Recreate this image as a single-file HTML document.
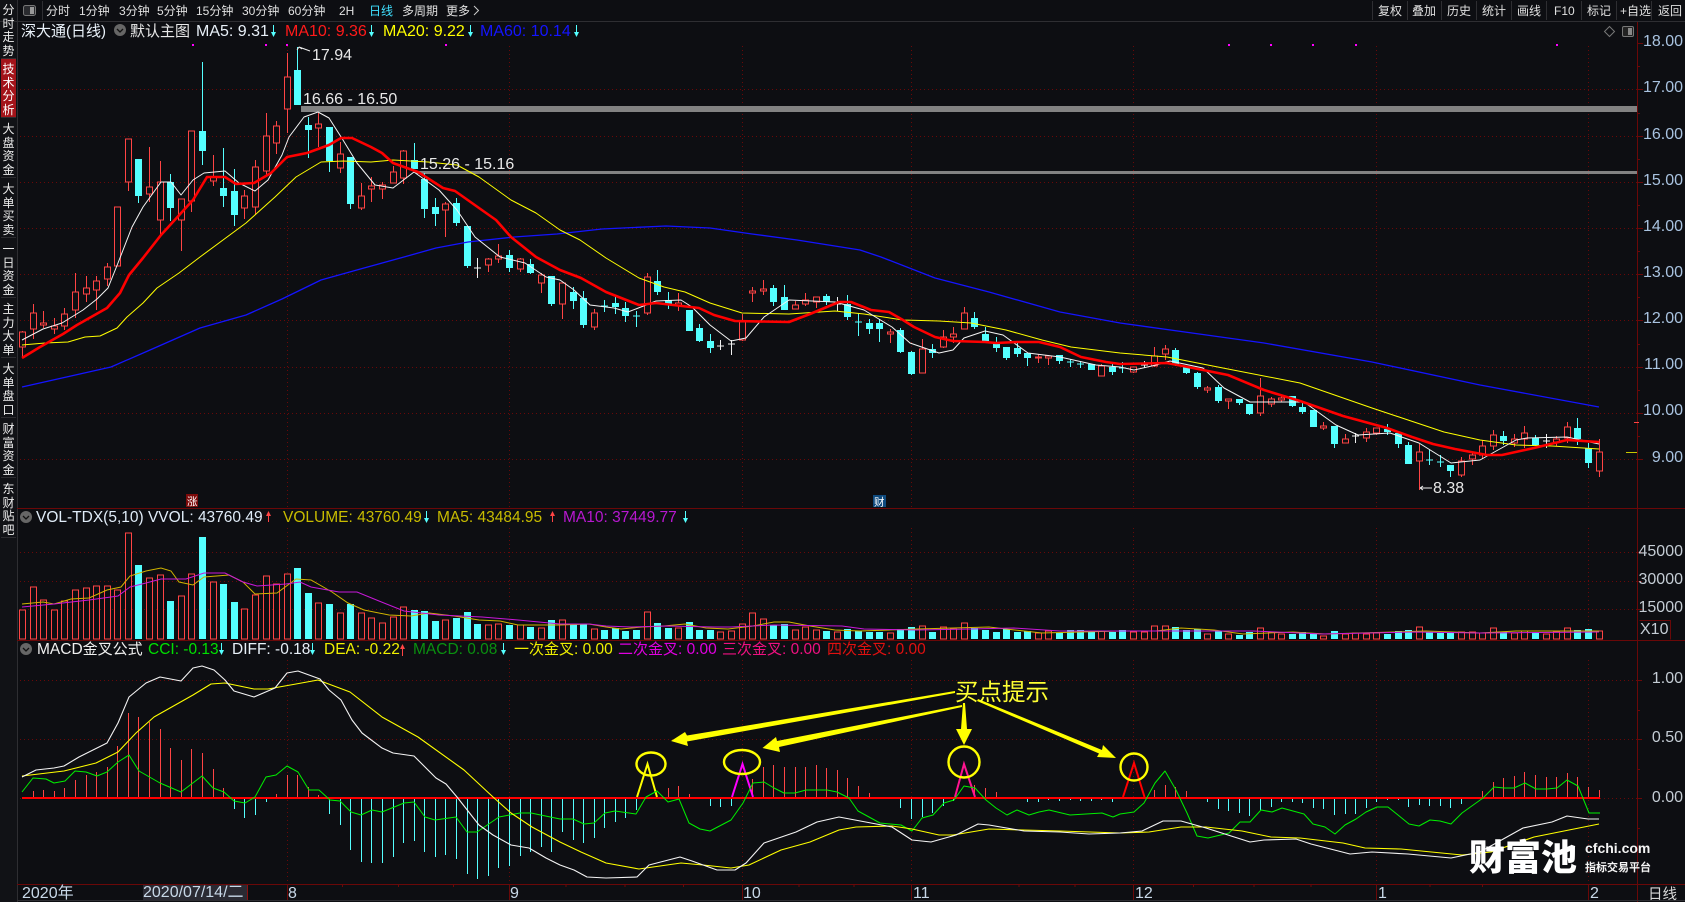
<!DOCTYPE html>
<html><head><meta charset="utf-8"><title>深大通</title>
<style>
html,body{margin:0;padding:0;background:#0d0e12;width:1685px;height:902px;overflow:hidden}
svg{position:absolute;left:0;top:0}
text{font-family:"Liberation Sans","Noto Sans CJK SC",sans-serif;white-space:pre}
.tb{font-size:12px;fill:#e0e0e0;font-family:"Liberation Sans","WenQuanYi Zen Hei","Noto Sans CJK SC",sans-serif}
.t{font-size:15.5px}
.ax{font-size:16px;fill:#a9c3e0;text-anchor:end}
.ax2{font-size:16px;fill:#c4ccd4;text-anchor:end}
.dt{font-size:16px;fill:#c8d8e8}
.ann{font-size:16px;fill:#e8e8e8}
.sb{position:absolute;left:1px;width:15px;height:59px;color:#eee;font:12px/13.5px "WenQuanYi Zen Hei","Noto Sans CJK SC",sans-serif;text-align:center;padding-top:0;box-sizing:border-box;border-bottom:1px solid #2c2c30}
.sb span{display:block;margin-top:3px}
.sba{background:#a3141a;color:#fff}
</style></head><body>
<svg width="1685" height="902" viewBox="0 0 1685 902" xmlns="http://www.w3.org/2000/svg">
<rect width="1685" height="902" fill="#0d0e12"/>
<!-- frame -->
<rect x="0" y="0" width="17" height="902" fill="#111216"/>
<path d="M17.5 0V902M0 21.5H1685" stroke="#2e2e32" fill="none"/>
<path d="M42.5 1V20M1372.5 1V20M1407.5 1V20M1441.5 1V20M1476.5 1V20M1511.5 1V20M1546.5 1V20M1581.5 1V20M1616.5 1V20M1651.5 1V20" stroke="#2e2e32" fill="none"/>
<!-- grid -->
<g stroke="#6a0808" stroke-dasharray="1 3" fill="none" shape-rendering="crispEdges">
<path d="M20 89.5H1637M20 136.5H1637M20 182.5H1637M20 228.5H1637M20 274.5H1637M20 320.5H1637M20 367.5H1637M20 413.5H1637M20 459.5H1637M20 552.5H1637M20 581.5H1637M20 609.5H1637M20 680.5H1637M20 739.5H1637M20 798.5H1637"/>
<path d="M287.5 46V508M509.5 46V508M742.5 46V508M911.5 46V508M1133.5 46V508M1376.5 46V508M1588.5 46V508M287.5 528V640M509.5 528V640M742.5 528V640M911.5 528V640M1133.5 528V640M1376.5 528V640M1588.5 528V640M287.5 660V884M509.5 660V884M742.5 660V884M911.5 660V884M1133.5 660V884M1376.5 660V884M1588.5 660V884"/>
</g>
<g stroke="#6a0808" fill="none" shape-rendering="crispEdges">
<path d="M17 508.5H1685M17 640.5H1685M17 884.5H1685M1637.5 22V902"/>
<path d="M1637 43.5h6M1637 89.5h6M1637 136.5h6M1637 182.5h6M1637 228.5h6M1637 274.5h6M1637 320.5h6M1637 367.5h6M1637 413.5h6M1637 459.5h6M1637 66.5h3M1637 113.5h3M1637 159.5h3M1637 205.5h3M1637 251.5h3M1637 297.5h3M1637 344.5h3M1637 390.5h3M1637 436.5h3M1637 552.5h5M1637 581.5h5M1637 609.5h5M1637 680.5h5M1637 739.5h5M1637 798.5h5M1637 710.5h3M1637 769.5h3M1637 828.5h3"/>
<path d="M287.5 884V900M509.5 884V900M742.5 884V900M911.5 884V900M1133.5 884V900M1376.5 884V900M1588.5 884V900M342.5 884v3M398.5 884v3M453.5 884v3M566 884v3M625 884v3M683.5 884v3M799 884v3M854 884v3M1019 884v3M1075 884v3M1193.5 884v3M1254 884v3M1311 884v3M1430 884v3M1482.5 884v3"/>
<path d="M1639.5 620.5H1670.5V639.5"/>
</g>
<path d="M17 900.5H1685" stroke="#2e2e32"/>
<!-- zones -->
<rect x="301" y="106" width="1336" height="6" fill="#828282"/>
<rect x="416" y="171" width="1221" height="3" fill="#828282"/>
<!-- magenta dots -->
<path d="M192 44h2v2h-2zM265 44h2v2h-2zM286 44h2v2h-2zM445 44h2v2h-2zM1228 44h2v2h-2zM1270 44h2v2h-2zM1312 44h2v2h-2zM1355 44h2v2h-2zM1556 44h2v2h-2z" fill="#ff00ff"/>
<!-- red wicks -->
<path stroke="#ff4444" fill="none" shape-rendering="crispEdges" d="M22.5 331V358M33.5 304V339M43.5 311V328M54.5 318V334M64.5 308V330M75.5 273V318M86.5 276V302M96.5 276V310M107.5 263V286M128.5 139V191M149.5 147V202M160.5 161V235M181.5 199V251M191.5 131V212M213.5 155V186M244.5 190V219M255.5 160V215M266.5 113V175M276.5 121V154M287.5 53V133M318.5 113V147M340.5 142V173M361.5 183V210M371.5 177V202M382.5 182V199M393.5 166V183M403.5 150V184M445.5 202V237M488.5 258V272M498.5 244V263M520.5 258V272M541.5 273V293M562.5 283V319M594.5 309V330M647.5 273V315M678.5 293V311M742.5 314V341M752.5 287V302M763.5 280V295M795.5 301V309M805.5 293V306M816.5 297V308M890.5 329V343M922.5 339V373M943.5 330V348M953.5 327V343M964.5 307V329M1038.5 354V363M1048.5 355V365M1101.5 364V376M1133.5 367V373M1154.5 347V367M1165.5 345V360M1207.5 386V393M1228.5 399V409M1260.5 378V416M1271.5 397V407M1281.5 396V402M1323.5 422V430M1345.5 434V443M1366.5 428V442M1376.5 428V435M1419.5 444V490M1461.5 457V477M1472.5 452V465M1482.5 440V459M1493.5 430V450M1514.5 434V447M1524.5 426V448M1556.5 436V446M1567.5 422V443M1599.5 439V477"/>
<!-- red bodies -->
<path stroke="#ff4444" fill="#0d0e12" shape-rendering="crispEdges" d="M19.5 332h6V347h-6zM30.5 313h6V329h-6zM40.5 323h6V325h-6zM51.5 326h6V329h-6zM61.5 314h6V326h-6zM72.5 292h6V310h-6zM83.5 288h6V294h-6zM93.5 281h6V290h-6zM104.5 267h6V279h-6zM114.5 207h6V266h-6zM125.5 139h6V182h-6zM146.5 187h6V194h-6zM157.5 182h6V220h-6zM178.5 199h6V220h-6zM188.5 131h6V201h-6zM210.5 177h6V181h-6zM241.5 196h6V208h-6zM252.5 167h6V207h-6zM263.5 136h6V171h-6zM273.5 126h6V143h-6zM284.5 77h6V109h-6zM315.5 124h6V128h-6zM337.5 154h6V168h-6zM358.5 196h6V208h-6zM368.5 186h6V189h-6zM379.5 185h6V189h-6zM390.5 172h6V183h-6zM400.5 151h6V178h-6zM442.5 204h6V210h-6zM485.5 259h6V265h-6zM495.5 256h6V259h-6zM517.5 259h6V269h-6zM538.5 275h6V283h-6zM559.5 283h6V304h-6zM591.5 313h6V327h-6zM644.5 277h6V313h-6zM675.5 303h6V305h-6zM739.5 322h6V340h-6zM749.5 291h6V293h-6zM760.5 289h6V291h-6zM792.5 305h6V309h-6zM802.5 300h6V304h-6zM813.5 297h6V302h-6zM887.5 332h6V334h-6zM919.5 349h6V373h-6zM940.5 337h6V347h-6zM950.5 334h6V337h-6zM961.5 313h6V329h-6zM1035.5 357h6V358h-6zM1045.5 356h6V358h-6zM1098.5 366h6V376h-6zM1130.5 367h6V372h-6zM1151.5 356h6V366h-6zM1162.5 349h6V354h-6zM1204.5 388h6V390h-6zM1225.5 399h6V401h-6zM1257.5 396h6V413h-6zM1268.5 399h6V404h-6zM1278.5 398h6V400h-6zM1320.5 426h6V428h-6zM1342.5 439h6V443h-6zM1363.5 432h6V438h-6zM1373.5 428h6V433h-6zM1416.5 452h6V461h-6zM1458.5 461h6V475h-6zM1469.5 455h6V459h-6zM1479.5 446h6V455h-6zM1490.5 435h6V446h-6zM1511.5 439h6V443h-6zM1521.5 433h6V439h-6zM1553.5 439h6V442h-6zM1564.5 427h6V438h-6zM1596.5 452h6V471h-6z"/>
<!-- cyan wicks + dojis -->
<path stroke="#54ffff" fill="none" shape-rendering="crispEdges" d="M138.5 159V203M170.5 174V221M202.5 62V165M223.5 148V207M234.5 169V226M297.5 47V105M308.5 117V158M329.5 127V172M350.5 157V209M414.5 143V169M424.5 173V218M435.5 198V226M456.5 198V226M467.5 226V268M509.5 250V272M530.5 259V274M551.5 276V306M573.5 287V309M583.5 291V328M604.5 300V312M601 306h7M615.5 297V314M625.5 302V322M636.5 311V327M633 316h7M657.5 270V295M668.5 292V309M689.5 310V331M699.5 324V342M710.5 334V353M773.5 285V306M784.5 285V310M826.5 294V305M847.5 295V320M858.5 313V336M855 322h7M869.5 319V334M879.5 319V342M900.5 328V353M911.5 351V375M932.5 344V358M974.5 312V329M985.5 327V343M996.5 337V352M1006.5 347V360M1017.5 343V357M1027.5 353V366M1059.5 355V364M1070.5 359V367M1067 362h7M1080.5 361V368M1077 364h7M1091.5 364V370M1112.5 363V375M1122.5 362V373M1119 368h7M1175.5 348V366M1186.5 366V374M1197.5 372V389M1218.5 385V403M1239.5 399V405M1249.5 404V415M1292.5 396V407M1302.5 403V414M1313.5 410V427M1334.5 426V448M1387.5 424V435M1398.5 433V448M1408.5 442V464M1429.5 450V465M1426 460h7M1440.5 455V467M1437 462h7M1450.5 465V477M1503.5 431V445M1535.5 435V446M1577.5 418V445M1588.5 443V468"/>
<!-- cyan bodies -->
<path stroke="#54ffff" stroke-width="7" fill="none" shape-rendering="crispEdges" d="M138.5 159V196M170.5 182V208M202.5 131V151M223.5 188V196M234.5 191V215M297.5 70V105M308.5 125V130M329.5 127V161M350.5 157V204M414.5 160V169M424.5 179V209M435.5 207V214M456.5 203V223M467.5 226V266M509.5 255V268M530.5 264V273M551.5 276V304M573.5 292V301M583.5 298V325M615.5 303V307M625.5 308V316M657.5 281V292M668.5 300V305M689.5 310V331M699.5 328V341M710.5 341V348M773.5 288V302M784.5 297V310M826.5 296V302M847.5 304V317M869.5 323V329M879.5 323V329M900.5 330V352M911.5 352V374M932.5 349V353M974.5 318V327M985.5 334V341M996.5 344V348M1006.5 347V358M1017.5 348V354M1027.5 353V358M1059.5 355V361M1091.5 364V370M1112.5 367V372M1175.5 350V365M1186.5 366V373M1197.5 373V387M1218.5 387V401M1239.5 399V403M1249.5 404V414M1292.5 396V406M1302.5 407V412M1313.5 410V427M1334.5 426V444M1387.5 429V432M1398.5 433V444M1408.5 445V464M1450.5 465V471M1503.5 436V441M1535.5 438V445M1577.5 428V439M1588.5 448V463"/>
<!-- white dojis -->
<path stroke="#f0f0f0" fill="none" shape-rendering="crispEdges" d="M477.5 258V278M474 268h7M720.5 340V350M717 346h7M731.5 340V355M728 344h7M837.5 297V311M834 304h7M1144.5 361V368M1141 365h7M1355.5 433V443M1352 436h7M1546.5 434V448M1543 441h7"/>
<!-- MA lines -->
<g fill="none" stroke-linejoin="round">
<path stroke="#1414ff" stroke-width="1.3" d="M22 387L111 367 150 350 200 328 246 315 282 299 321 280 364 268 404 257 436 248 468 242 514 237 557 234 602 229 666 226 710 228 752 234 797 240 860 250 881 257 935 278 989 292 1060 312 1120 323 1192 333 1264 343 1372 362 1480 385 1599 407"/>
<path stroke="#ffff00" d="M22 345L45 343 68 342 85 337 100 336 117 328 127 317 143 303 157 288 179 273 200 257 246 223 275 197 296 177 321 162 343 161 371 162 393 160 428 162 457 165 479 177 511 200 536 213 560 230 580 240 606 258 639 278 664 287 685 292 710 303 742 313 789 314 835 311 864 314 903 320 939 321 971 323 1006 330 1042 340 1071 347 1120 353 1167 357 1228 369 1300 383 1372 408 1444 432 1480 440 1516 445 1552 446 1599 449"/>
<path stroke="#f4f4f4" d="M22 340L43 329 62 323 83 310 97 299 108 288 118 263 132 227 143 207 161 182 171 182 181 195 193 180 204 173 225 171 239 183 255 191 268 180 282 155 289 137 304 117 318 112 329 118 343 140 357 163 375 185 393 188 414 172 439 190 457 210 475 237 500 257 525 263 546 277 560 280 574 290 590 305 614 308 628 312 646 305 656 301 681 300 692 307 710 325 731 341 746 338 764 317 789 300 835 302 864 310 892 327 910 343 939 353 953 350 964 338 985 331 1003 335 1028 353 1060 357 1096 365 1120 367 1134 370 1156 365 1170 361 1203 368 1224 388 1250 402 1304 402 1336 425 1358 435 1390 433 1419 443 1451 463 1480 460 1516 440 1527 438 1567 437 1599 444"/>
<path stroke="#ff0000" stroke-width="2.6" d="M22 358L40 347 63 334 77 325 107 308 120 293 129 275 143 258 161 235 193 200 207 177 225 177 236 184 254 183 271 173 287 157 307 153 329 145 341 138 352 138 371 147 382 153 393 163 418 172 443 188 455 191 479 208 496 220 511 237 536 257 560 270 581 278 606 292 639 305 656 303 699 308 714 315 735 321 789 322 810 314 839 302 851 302 871 310 889 312 903 320 914 327 935 337 953 341 985 342 996 343 1017 342 1039 342 1060 347 1081 357 1106 362 1120 364 1167 363 1188 367 1228 375 1264 390 1300 401 1343 416 1387 428 1412 437 1433 444 1455 449 1487 455 1502 455 1534 448 1567 440 1599 442"/>
</g>
<!-- annotations -->
<path d="M299 47l-2 3M299 47l3 2M299 47l11 4" stroke="#f0f0f0" fill="none"/>
<path d="M1420 488h12M1420 488l3-2M1420 488l3 2" stroke="#f0f0f0" fill="none"/>
<text class="ann" x="312" y="60">17.94</text>
<text class="ann" x="303" y="104">16.66 - 16.50</text>
<text class="ann" x="420" y="169">15.26 - 15.16</text>
<text class="ann" x="1433" y="493">8.38</text>
<path d="M1634 422.5h5M1626 452.5h11" stroke="#ff4444" fill="none" shape-rendering="crispEdges"/>
<path d="M1626 452.5h11" stroke="#c8c800" fill="none" shape-rendering="crispEdges"/>
<!-- badges -->
<rect x="186" y="494" width="12" height="13" fill="#7c0a0a"/>
<text x="187" y="505" style="font-size:10.5px;fill:#fff">涨</text>
<rect x="873" y="495" width="13" height="12" fill="#0e4a7e"/>
<text x="874" y="505.5" style="font-size:10.5px;fill:#fff">财</text>
<!-- volume -->
<path stroke="#ff4444" fill="#0d0e12" shape-rendering="crispEdges" d="M19.5 610h6V639h-6zM30.5 587h6V639h-6zM40.5 600h6V639h-6zM51.5 610h6V639h-6zM61.5 601h6V639h-6zM72.5 590h6V639h-6zM83.5 588h6V639h-6zM93.5 586h6V639h-6zM104.5 586h6V639h-6zM114.5 590h6V639h-6zM125.5 533h6V639h-6zM146.5 578h6V639h-6zM157.5 575h6V639h-6zM178.5 596h6V639h-6zM188.5 574h6V639h-6zM210.5 582h6V639h-6zM241.5 609h6V639h-6zM252.5 595h6V639h-6zM263.5 576h6V639h-6zM273.5 584h6V639h-6zM284.5 574h6V639h-6zM315.5 603h6V639h-6zM337.5 613h6V639h-6zM358.5 613h6V639h-6zM368.5 618h6V639h-6zM379.5 623h6V639h-6zM390.5 617h6V639h-6zM400.5 607h6V639h-6zM442.5 620h6V639h-6zM485.5 625h6V639h-6zM495.5 624h6V639h-6zM517.5 625h6V639h-6zM538.5 628h6V639h-6zM559.5 620h6V639h-6zM591.5 629h6V639h-6zM644.5 612h6V639h-6zM675.5 628h6V639h-6zM717.5 632h6V639h-6zM728.5 631h6V639h-6zM739.5 624h6V639h-6zM749.5 613h6V639h-6zM760.5 619h6V639h-6zM792.5 630h6V639h-6zM802.5 627h6V639h-6zM813.5 630h6V639h-6zM834.5 632h6V639h-6zM887.5 633h6V639h-6zM919.5 626h6V639h-6zM940.5 627h6V639h-6zM950.5 629h6V639h-6zM961.5 623h6V639h-6zM1035.5 633h6V639h-6zM1045.5 631h6V639h-6zM1098.5 631h6V639h-6zM1130.5 632h6V639h-6zM1141.5 632h6V639h-6zM1151.5 626h6V639h-6zM1162.5 626h6V639h-6zM1204.5 634h6V639h-6zM1225.5 634h6V639h-6zM1257.5 628h6V639h-6zM1268.5 632h6V639h-6zM1278.5 634h6V639h-6zM1320.5 636h6V639h-6zM1342.5 634h6V639h-6zM1352.5 633h6V639h-6zM1363.5 634h6V639h-6zM1373.5 633h6V639h-6zM1416.5 627h6V639h-6zM1458.5 632h6V639h-6zM1469.5 632h6V639h-6zM1479.5 633h6V639h-6zM1490.5 628h6V639h-6zM1511.5 633h6V639h-6zM1521.5 631h6V639h-6zM1543.5 634h6V639h-6zM1553.5 632h6V639h-6zM1564.5 628h6V639h-6zM1596.5 631h6V639h-6z"/>
<path stroke="#54ffff" stroke-width="7" fill="none" shape-rendering="crispEdges" d="M138.5 565V639M170.5 601V639M202.5 537V639M223.5 584V639M234.5 602V639M297.5 568V639M308.5 593V639M329.5 604V639M350.5 604V639M414.5 610V639M424.5 611V639M435.5 621V639M456.5 618V639M467.5 612V639M477.5 624V639M509.5 625V639M530.5 627V639M551.5 620V639M573.5 624V639M583.5 624V639M604.5 630V639M615.5 628V639M625.5 631V639M636.5 630V639M657.5 623V639M668.5 628V639M689.5 622V639M699.5 630V639M710.5 630V639M773.5 625V639M784.5 624V639M826.5 631V639M847.5 629V639M858.5 631V639M869.5 632V639M879.5 632V639M900.5 629V639M911.5 627V639M932.5 632V639M974.5 628V639M985.5 630V639M996.5 632V639M1006.5 629V639M1017.5 632V639M1027.5 631V639M1059.5 633V639M1070.5 630V639M1080.5 630V639M1091.5 632V639M1112.5 632V639M1122.5 630V639M1175.5 627V639M1186.5 630V639M1197.5 629V639M1218.5 631V639M1239.5 635V639M1249.5 632V639M1292.5 634V639M1302.5 632V639M1313.5 633V639M1334.5 631V639M1387.5 634V639M1398.5 631V639M1408.5 630V639M1429.5 632V639M1440.5 633V639M1450.5 633V639M1503.5 632V639M1535.5 632V639M1577.5 630V639M1588.5 629V639"/>
<g fill="none">
<path stroke="#d0b400" d="M22 604L43 602 54 604 71 599 89 598 107 590 121 587 130 576 146 571 161 568 171 571 179 582 193 585 204 577 229 575 243 582 255 594 277 593 296 579 311 580 332 592 348 603 364 610 389 615 411 616 429 613 454 616 479 620 500 621 518 625 560 625 589 624 606 627 621 629 642 627 664 626 685 624 706 628 728 629 753 626 774 622 789 622 810 626 835 630 860 631 917 629 953 628 989 627 1024 631 1042 633 1120 631 1156 631 1181 628 1214 630 1243 634 1293 632 1325 634 1426 631 1480 633 1516 631 1599 631"/>
<path stroke="#c818d8" d="M22 607L54 604 89 600 118 596 130 587 146 583 161 579 186 579 204 573 225 573 243 582 257 586 286 584 300 582 311 587 339 592 357 592 379 601 404 611 439 615 482 617 518 620 560 624 589 624 606 626 631 627 667 626 714 627 731 627 774 625 842 626 864 629 917 630 971 629 1014 628 1060 631 1120 631 1149 631 1253 631 1322 634 1415 632 1480 633 1599 632"/>
</g>
<!-- MACD sticks -->
<path stroke="#ff4444" fill="none" shape-rendering="crispEdges" d="M33.5 798V791M43.5 798V790M54.5 798V791M64.5 798V788M75.5 798V780M86.5 798V775M96.5 798V772M107.5 798V767M117.5 798V746M128.5 798V713M138.5 798V717M149.5 798V722M160.5 798V729M170.5 798V748M181.5 798V760M191.5 798V749M202.5 798V753M213.5 798V769M223.5 798V788M276.5 798V794M287.5 798V775M297.5 798V775M308.5 798V787M318.5 798V795M668.5 798V788M678.5 798V786M689.5 798V794M752.5 798V779M763.5 798V767M773.5 798V765M784.5 798V767M795.5 798V767M805.5 798V767M816.5 798V765M826.5 798V768M837.5 798V770M847.5 798V778M858.5 798V786M869.5 798V793M974.5 798V785M985.5 798V788M996.5 798V792M1154.5 798V790M1165.5 798V785M1175.5 798V787M1186.5 798V791M1482.5 798V791M1493.5 798V782M1503.5 798V778M1514.5 798V776M1524.5 798V772M1535.5 798V775M1546.5 798V777M1556.5 798V777M1567.5 798V773M1577.5 798V777M1588.5 798V787M1599.5 798V790"/>
<path stroke="#54ffff" fill="none" shape-rendering="crispEdges" d="M234.5 798V809M244.5 798V818M255.5 798V815M266.5 798V802M329.5 798V814M340.5 798V825M350.5 798V850M361.5 798V862M371.5 798V863M382.5 798V863M393.5 798V857M403.5 798V843M414.5 798V841M424.5 798V852M435.5 798V857M445.5 798V855M456.5 798V859M467.5 798V874M477.5 798V879M488.5 798V876M498.5 798V868M509.5 798V866M520.5 798V856M530.5 798V852M541.5 798V847M551.5 798V852M562.5 798V832M573.5 798V840M583.5 798V843M594.5 798V838M604.5 798V828M615.5 798V822M625.5 798V818M636.5 798V810M699.5 798V799M710.5 798V806M720.5 798V807M731.5 798V806M900.5 798V808M911.5 798V819M922.5 798V817M932.5 798V813M943.5 798V806M953.5 798V801M1027.5 798V802M1038.5 798V802M1048.5 798V800M1059.5 798V801M1070.5 798V800M1080.5 798V801M1091.5 798V801M1101.5 798V800M1112.5 798V802M1207.5 798V802M1218.5 798V809M1228.5 798V811M1239.5 798V813M1249.5 798V816M1260.5 798V810M1271.5 798V807M1281.5 798V802M1292.5 798V802M1302.5 798V803M1313.5 798V808M1323.5 798V809M1334.5 798V815M1345.5 798V814M1355.5 798V814M1366.5 798V808M1376.5 798V802M1387.5 798V800M1398.5 798V800M1408.5 798V807M1419.5 798V805M1429.5 798V806M1440.5 798V806M1450.5 798V808M1461.5 798V804"/>
<!-- triangles & zero line -->
<path d="M22 798H1600" stroke="#ff0000" stroke-width="2.2" shape-rendering="crispEdges"/>
<g fill="none" stroke-width="2">
<path stroke="#ffff00" d="M637 797L647.5 764 657 797"/>
<path stroke="#ff00ff" d="M732 797L742.5 764 753 797"/>
<path stroke="#ff1490" d="M955 797L964 764 975 797"/>
<path stroke="#ff0000" d="M1123 797L1134 763 1144.5 797"/>
</g>
<!-- MACD lines -->
<g fill="none" stroke-linejoin="round">
<path stroke="#00f000" d="M22 792L33 778 46 779 54 783 65 781 75 771 86 772 97 776 107 772 118 762 129 755 139 771 160 783 181 792 202 776 213 788 224 792 234 801 245 803 255 797 266 777 276 775 287 766 298 772 309 790 319 790 330 800 340 801 351 812 361 815 372 810 382 812 404 803 414 802 425 817 435 820 456 817 467 832 477 832 499 817 520 813 531 813 560 819 573 819 584 824 594 823 605 813 615 811 636 814 646 797 657 791 668 802 679 799 689 823 700 829 710 831 731 820 743 803 753 783 764 782 774 788 784 793 795 793 806 790 827 790 837 792 849 798 858 811 869 817 880 823 901 825 912 831 922 818 933 815 944 803 954 800 964 786 975 788 986 800 996 808 1007 815 1017 810 1029 815 1039 812 1049 810 1070 815 1102 813 1113 817 1120 814 1134 812 1144 803 1155 783 1165 771 1176 790 1187 813 1197 836 1208 838 1229 833 1240 822 1250 822 1261 810 1272 812 1282 808 1304 814 1313 824 1325 827 1335 834 1345 825 1356 819 1366 812 1377 807 1388 807 1398 815 1409 824 1419 826 1430 820 1440 821 1451 824 1462 813 1483 798 1494 787 1504 788 1514 788 1525 783 1536 789 1547 789 1557 788 1567 780 1578 786 1589 813 1600 813"/>
<path stroke="#ffff00" stroke-width="1.1" d="M22 776L64 771 96 763 118 752 136 733 154 717 193 695 211 684 225 683 254 689 268 689 296 684 318 680 350 692 382 717 418 737 464 770 493 797 511 813 532 827 560 842 581 852 606 863 639 869 681 863 703 865 731 868 749 865 781 850 810 842 839 830 856 827 892 826 912 829 939 835 953 835 989 829 1024 830 1060 831 1120 833 1149 832 1181 827 1206 827 1242 831 1271 837 1300 838 1343 843 1365 848 1401 849 1462 855 1491 852 1534 837 1599 824"/>
<path stroke="#f4f4f4" stroke-width="1.1" d="M22 777L36 770 54 768 64 766 79 757 107 743 118 723 129 697 146 683 160 677 181 681 193 668 202 666 214 670 225 680 234 691 254 697 275 688 287 673 298 671 320 679 329 690 341 700 352 720 362 733 382 748 393 753 414 756 436 778 446 784 457 797 479 825 493 835 511 845 529 848 546 858 560 865 574 870 587 877 606 878 637 877 649 865 680 857 692 861 717 870 735 870 746 863 764 843 796 832 817 822 839 817 871 823 892 827 912 840 931 842 956 835 978 824 989 825 1024 831 1060 832 1089 834 1120 833 1142 831 1163 821 1181 821 1206 828 1250 842 1264 840 1296 839 1311 844 1350 854 1372 852 1408 854 1451 858 1480 852 1523 828 1552 822 1567 816 1588 819 1599 819"/>
</g>
<!-- yellow callouts -->
<g fill="none" stroke="#ffff00" stroke-width="2.4">
<ellipse cx="651" cy="764" rx="14.5" ry="11.5"/>
<ellipse cx="742" cy="762" rx="18" ry="12"/>
<ellipse cx="964" cy="762" rx="15.5" ry="15.5"/>
<ellipse cx="1134" cy="767" rx="13.5" ry="13.5"/>
</g>
<g fill="#ffff00">
<polygon points="955,691 687,735.5 685,732 671,741 688,746 687,741.5 955,693"/>
<polygon points="962,705 777,741 776,737 762.5,748 780,752 779,747 962,707"/>
<polygon points="963,703 961,729 956,729 964,745 972,729 967,729 965,703"/>
<polygon points="978,699 1102,750 1103,745 1116,758 1097,757 1099,753.5 977,701"/>
</g>
<text x="955" y="700" style="font-size:23.5px;fill:#ffff33">买点提示</text>
<!-- watermark -->
<text x="1469" y="870" style="font-size:36px;font-weight:900;fill:#fff;font-family:'Noto Sans CJK SC',sans-serif">财富池</text>
<text x="1585" y="853" style="font-size:14px;font-weight:bold;fill:#f4f4f4">cfchi.com</text>
<text x="1585" y="871" style="font-size:11px;font-weight:bold;fill:#f4f4f4;font-family:'Noto Sans CJK SC',sans-serif">指标交易平台</text>
<!-- toolbar -->
<rect x="23.5" y="5.5" width="12" height="10" rx="2" fill="#2a2b2f" stroke="#777"/>
<rect x="30" y="7" width="4" height="7" fill="#999"/>
<text class="tb" x="46" y="15">分时</text>
<text class="tb" x="79" y="15">1分钟</text>
<text class="tb" x="119" y="15">3分钟</text>
<text class="tb" x="157" y="15">5分钟</text>
<text class="tb" x="196" y="15">15分钟</text>
<text class="tb" x="242" y="15">30分钟</text>
<text class="tb" x="288" y="15">60分钟</text>
<text class="tb" x="339" y="15">2H</text>
<text class="tb" x="369" y="15" style="fill:#3fe0ff">日线</text>
<text class="tb" x="402" y="15">多周期</text>
<text class="tb" x="446" y="15">更多</text>
<path d="M474 6l4.5 4.5L474 15" stroke="#ccc" fill="none"/>
<text class="tb" x="1378" y="15">复权</text>
<text class="tb" x="1412" y="15">叠加</text>
<text class="tb" x="1447" y="15">历史</text>
<text class="tb" x="1482" y="15">统计</text>
<text class="tb" x="1517" y="15">画线</text>
<text class="tb" x="1554" y="15">F10</text>
<text class="tb" x="1587" y="15">标记</text>
<text class="tb" x="1620" y="15">+自选</text>
<text class="tb" x="1658" y="15">返回</text>
<!-- title row main -->
<text class="t" x="21" y="36" style="fill:#eaf2fa;font-size:15px">深大通(日线)</text>
<circle cx="120" cy="30" r="6" fill="#666"/><path d="M117 29l3 3 3-3" stroke="#111" fill="none" stroke-width="1.3"/>
<text class="t" x="130" y="36" style="fill:#e8e8e8;font-size:15px">默认主图</text>
<text class="t" x="196" y="36" style="fill:#e8f0f8;font-size:16px">MA5: 9.31</text>
<text class="t" x="285" y="36" style="fill:#ff1a1a;font-size:16px">MA10: 9.36</text>
<text class="t" x="383" y="36" style="fill:#ffff00;font-size:16px">MA20: 9.22</text>
<text class="t" x="480" y="36" style="fill:#1414ff;font-size:16px">MA60: 10.14</text>
<path d="M273.5 25v10M371.5 25v10M470.5 25v10M576.5 25v10" stroke="#54ffff" fill="none"/>
<path d="M271 32h5l-2.5 5zM369 32h5l-2.5 5zM468 32h5l-2.5 5zM574 32h5l-2.5 5z" fill="#54ffff"/>
<!-- title icons right -->
<path d="M1609.5 26.5l5 5-5 5-5-5z" stroke="#777" fill="none"/>
<rect x="1622.5" y="26.5" width="11" height="10" rx="1.5" fill="#222" stroke="#777"/>
<rect x="1628" y="28" width="4" height="7" fill="#888"/>
<!-- vol title -->
<circle cx="26" cy="517" r="6" fill="#666"/><path d="M23 516l3 3 3-3" stroke="#111" fill="none" stroke-width="1.3"/>
<text class="t" x="36" y="522" style="fill:#e0ecf8">VOL-TDX(5,10) VVOL: 43760.49</text>
<text class="t" x="283" y="522" style="fill:#c8bc00">VOLUME: 43760.49</text>
<text class="t" x="437" y="522" style="fill:#c8bc00">MA5: 43484.95</text>
<text class="t" x="563" y="522" style="fill:#b818d0">MA10: 37449.77</text>
<path d="M268.5 512v10M552.5 512v10" stroke="#ff4444" fill="none"/><path d="M266 516h5l-2.500-5zM550 516h5l-2.500-5z" fill="#ff4444"/>
<path d="M426.5 511v10M685.5 511v10" stroke="#54ffff" fill="none"/><path d="M424 518h5l-2.500 5zM683 518h5l-2.500 5z" fill="#54ffff"/>
<!-- macd title -->
<circle cx="26" cy="649" r="6" fill="#666"/><path d="M23 648l3 3 3-3" stroke="#111" fill="none" stroke-width="1.3"/>
<text class="t" x="37" y="654" style="fill:#f0f0f0">MACD<tspan style="font-size:15px">金叉公式</tspan></text>
<text class="t" x="148" y="654" style="fill:#00e000">CCI: -0.13</text>
<text class="t" x="232" y="654" style="fill:#e8f0f8">DIFF: -0.18</text>
<text class="t" x="324" y="654" style="fill:#f0f000">DEA: -0.22</text>
<text class="t" x="413" y="654" style="fill:#0a9010">MACD: 0.08</text>
<text class="t" x="514" y="654" style="fill:#f0f000"><tspan style="font-size:15px">一次金叉</tspan>: 0.00</text>
<text class="t" x="618" y="654" style="fill:#e000e0"><tspan style="font-size:15px">二次金叉</tspan>: 0.00</text>
<text class="t" x="722" y="654" style="fill:#f01080"><tspan style="font-size:15px">三次金叉</tspan>: 0.00</text>
<text class="t" x="827" y="654" style="fill:#e01010"><tspan style="font-size:15px">四次金叉</tspan>: 0.00</text>
<path d="M221.5 643v10M312.500 643v10M503.500 643v10" stroke="#54ffff" fill="none"/><path d="M219 650h5l-2.500 5zM310 650h5l-2.500 5zM501 650h5l-2.500 5z" fill="#54ffff"/>
<path d="M402.500 646v10" stroke="#ff4444" fill="none"/><path d="M400 649h5l-2.500-5z" fill="#ff4444"/>
<!-- axis labels -->
<text class="ax" x="1683" y="46">18.00</text>
<text class="ax" x="1683" y="92">17.00</text>
<text class="ax" x="1683" y="139">16.00</text>
<text class="ax" x="1683" y="185">15.00</text>
<text class="ax" x="1683" y="231">14.00</text>
<text class="ax" x="1683" y="277">13.00</text>
<text class="ax" x="1683" y="323">12.00</text>
<text class="ax" x="1683" y="369">11.00</text>
<text class="ax" x="1683" y="415">10.00</text>
<text class="ax" x="1683" y="462">9.00</text>
<text class="ax2" x="1683" y="556">45000</text>
<text class="ax2" x="1683" y="584">30000</text>
<text class="ax2" x="1683" y="612">15000</text>
<text x="1640" y="634" style="font-size:16px;fill:#c4ccd4">X10</text>
<text class="ax2" x="1683" y="683">1.00</text>
<text class="ax2" x="1683" y="742">0.50</text>
<text class="ax2" x="1683" y="802">0.00</text>
<!-- date axis -->
<rect x="143" y="885" width="105" height="15" fill="#2a2a33"/>
<path d="M247.500 885V900" stroke="#8a1010"/>
<text class="dt" x="22" y="898">2020年</text>
<text class="dt" x="143" y="897">2020/07/14/二</text>
<text class="dt" x="288" y="898">8</text>
<text class="dt" x="510" y="898">9</text>
<text class="dt" x="743" y="898">10</text>
<text class="dt" x="913" y="898">11</text>
<text class="dt" x="1135" y="898">12</text>
<text class="dt" x="1378" y="898">1</text>
<text class="dt" x="1590" y="898">2</text>
<text x="1648" y="899" style="font-size:14.500px;fill:#d8d8d8">日线</text>
</svg>
<div class="sb" style="top:0"><span>分<br>时<br>走<br>势</span></div>
<div class="sb sba" style="top:59px"><span>技<br>术<br>分<br>析</span></div>
<div class="sb" style="top:119px"><span>大<br>盘<br>资<br>金</span></div>
<div class="sb" style="top:179px"><span>大<br>单<br>买<br>卖</span></div>
<div class="sb" style="top:239px"><span>一<br>日<br>资<br>金</span></div>
<div class="sb" style="top:299px"><span>主<br>力<br>大<br>单</span></div>
<div class="sb" style="top:359px"><span>大<br>单<br>盘<br>口</span></div>
<div class="sb" style="top:419px"><span>财<br>富<br>资<br>金</span></div>
<div class="sb" style="top:479px"><span>东<br>财<br>贴<br>吧</span></div>
</body></html>
